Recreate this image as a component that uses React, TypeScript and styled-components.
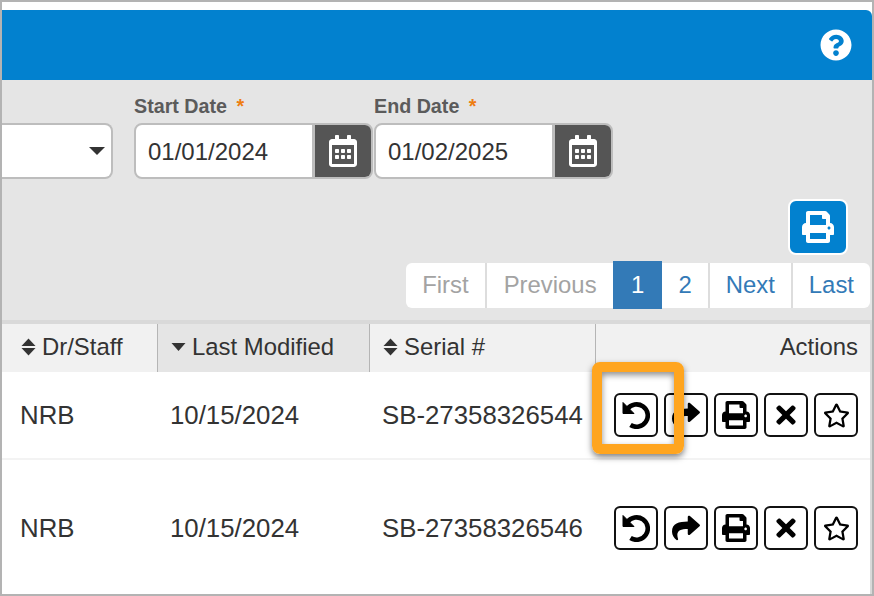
import styled, { createGlobalStyle } from 'styled-components';
import { FaPrint, FaQuestionCircle, FaRegCalendarAlt, FaRegStar, FaShare, FaTimes } from 'react-icons/fa';

const GlobalStyle = createGlobalStyle`
  html, body { margin: 0; padding: 0; background: #fff; }
  body { font-family: "Liberation Sans", Arial, sans-serif; color: #333; }
`;

const rows = [
  { staff: 'NRB', modified: '10/15/2024', serial: 'SB-27358326544', tall: false },
  { staff: 'NRB', modified: '10/15/2024', serial: 'SB-27358326546', tall: true },
];

export default function App() {
  return (
    <>
      <GlobalStyle />
      <Frame>
        <Banner>
          <HelpButton><FaQuestionCircle /></HelpButton>
        </Banner>
        <Filters>
          <SelectBox><SelectCaret /></SelectBox>
          <DateField label="Start Date" value="01/01/2024" />
          <DateField label="End Date" value="01/02/2025" />
        </Filters>
        <Tools>
          <PrintButton><FaPrint /></PrintButton>
          <Pager>
            <PageLink $muted>First</PageLink>
            <PageLink $muted>Previous</PageLink>
            <PageLink $active>1</PageLink>
            <PageLink $flush>2</PageLink>
            <PageLink>Next</PageLink>
            <PageLink>Last</PageLink>
          </Pager>
        </Tools>
        <Table>
          <HeadCell />
          <HeadCell><SortIcon />Dr/Staff</HeadCell>
          <HeadCell $sorted><SortIcon down />Last Modified</HeadCell>
          <HeadCell><SortIcon />Serial #</HeadCell>
          <ActionsHead>Actions</ActionsHead>
          {rows.map((row) => (
            <Row key={row.serial}>
              <Cell $tall={row.tall} />
              <Cell $tall={row.tall}>{row.staff}</Cell>
              <Cell $tall={row.tall}>{row.modified}</Cell>
              <Cell $tall={row.tall}>{row.serial}</Cell>
              <ActionCell $tall={row.tall}>
                <ActionButton><UndoIcon /></ActionButton>
                <ActionButton><FaShare /></ActionButton>
                <ActionButton><FaPrint /></ActionButton>
                <ActionButton><FaTimes /></ActionButton>
                <ActionButton $small><FaRegStar /></ActionButton>
              </ActionCell>
            </Row>
          ))}
        </Table>
        <Highlight />
      </Frame>
    </>
  );
}

function DateField({ label, value }: { label: string; value: string }) {
  return (
    <Field>
      <FieldLabel>{label} <Required>*</Required></FieldLabel>
      <DateGroup>
        <DateValue>{value}</DateValue>
        <CalendarButton><FaRegCalendarAlt /></CalendarButton>
      </DateGroup>
    </Field>
  );
}

function SortIcon({ down }: { down?: boolean }) {
  return (
    <svg width="15" height="18" viewBox="0 0 15 18" fill="currentColor">
      {down ? (
        <path d="M0.5 5 L14.5 5 L7.5 13 Z" />
      ) : (
        <>
          <path d="M7.5 0.5 L14.5 8 L0.5 8 Z" />
          <path d="M0.5 10 L14.5 10 L7.5 17.5 Z" />
        </>
      )}
    </svg>
  );
}

function UndoIcon() {
  return (
    <svg width="28" height="28" viewBox="0 0 28 28" fill="none">
      <path d="M1 1.5 L1 12.5 L12 12.5 Z" fill="#000" stroke="#000" strokeWidth="1" strokeLinejoin="round" />
      <path d="M5.5 8 A11.2 11.2 0 1 1 8.5 24" stroke="#000" strokeWidth="4.6" />
    </svg>
  );
}

const Frame = styled.div`
  position: relative;
  box-sizing: border-box;
  width: 874px;
  height: 596px;
  padding-top: 8px;
  border: 2px solid #b3b3b3;
  overflow: hidden;
  background: #fff;
`;

const Banner = styled.div`
  display: flex;
  align-items: center;
  justify-content: flex-end;
  height: 70px;
  padding-right: 20px;
  box-sizing: border-box;
  border-top-right-radius: 6px;
  background: #0281cf;
`;

const HelpButton = styled.div`
  display: flex;
  color: #fff;
  font-size: 32px;
`;

const Filters = styled.div`
  display: flex;
  align-items: flex-end;
  height: 110px;
  padding-bottom: 11px;
  box-sizing: border-box;
  background: #e5e5e5;
`;

const SelectBox = styled.div`
  display: flex;
  align-items: center;
  justify-content: flex-end;
  box-sizing: border-box;
  width: 111px;
  height: 56px;
  margin-right: 21px;
  padding-right: 6px;
  border: 2px solid #bdbdbd;
  border-left: 0;
  border-radius: 0 8px 8px 0;
  background: #fff;
`;

const SelectCaret = styled.span`
  width: 0;
  height: 0;
  border-left: 8px solid transparent;
  border-right: 8px solid transparent;
  border-top: 8px solid #333;
`;

const Field = styled.div`
  display: flex;
  flex-direction: column;
  margin-right: 1px;
`;

const FieldLabel = styled.div`
  height: 28px;
  color: #5b5b5b;
  font-size: 19.7px;
  font-weight: 700;
`;

const Required = styled.span`
  margin-left: 4px;
  color: #ee7d11;
`;

const DateGroup = styled.div`
  display: flex;
  box-sizing: border-box;
  width: 239px;
  height: 56px;
  border: 2px solid #bdbdbd;
  border-radius: 8px;
  background: #fff;
  overflow: hidden;
`;

const DateValue = styled.div`
  flex: 1;
  padding-left: 12px;
  border-right: 3px solid #bdbdbd;
  font-size: 24px;
  line-height: 54px;
  color: #333;
`;

const CalendarButton = styled.div`
  display: flex;
  align-items: center;
  justify-content: center;
  width: 56px;
  background: #555;
  color: #fff;
  font-size: 32px;
`;

const Tools = styled.div`
  display: flex;
  flex-direction: column;
  align-items: flex-end;
  height: 130px;
  padding-right: 2px;
  box-sizing: border-box;
  background: #e5e5e5;
`;

const PrintButton = styled.div`
  display: flex;
  align-items: center;
  justify-content: center;
  box-sizing: border-box;
  width: 60px;
  height: 56px;
  margin: 9px 22px 0 0;
  border: 2px solid #fff;
  border-radius: 8px;
  background: #0281cf;
  color: #fff;
  font-size: 32px;
`;

const Pager = styled.div`
  display: flex;
  align-items: center;
  margin-top: 6px;
  height: 48px;
`;

const PageLink = styled.div<{ $muted?: boolean; $active?: boolean; $flush?: boolean }>`
  display: flex;
  align-items: center;
  box-sizing: border-box;
  height: ${(p) => (p.$active ? '48px' : '45px')};
  padding: 0 ${(p) => (p.$active ? '18px' : p.$muted ? '16.5px' : '16px')};
  border-left: ${(p) => (p.$active || p.$flush ? '0' : '2px solid #ddd')};
  background: ${(p) => (p.$active ? '#337ab7' : '#fff')};
  color: ${(p) => (p.$active ? '#fff' : p.$muted ? '#a3a3a3' : '#337ab7')};
  font-size: 23.9px;
  &:first-child { border-left: 0; border-radius: 6px 0 0 6px; }
  &:last-child { border-radius: 0 6px 6px 0; }
`;

const Table = styled.div`
  display: grid;
  grid-template-columns: 6px 150px 212px 226px 274px;
  border-top: 4px solid #d9d9d9;
  border-right: 2px solid #d9d9d9;
  background: #fff;
`;

const HeadCell = styled.div<{ $sorted?: boolean }>`
  display: flex;
  align-items: center;
  gap: 6px;
  box-sizing: border-box;
  height: 48px;
  padding: 0 0 2px 13px;
  border-right: 1px solid #b5b5b5;
  background: ${(p) => (p.$sorted ? '#e5e5e5' : '#f1f1f1')};
  color: #333;
  font-size: 23.9px;
`;

const ActionsHead = styled(HeadCell)`
  justify-content: flex-end;
  padding-right: 12px;
  border-right: 0;
`;

const Row = styled.div`
  display: contents;
`;

const Cell = styled.div<{ $tall?: boolean }>`
  display: flex;
  align-items: center;
  box-sizing: border-box;
  height: ${(p) => (p.$tall ? '136px' : '88px')};
  padding-left: 12px;
  border-bottom: ${(p) => (p.$tall ? '0' : '2px solid #f3f3f3')};
  color: #333;
  font-size: 25.8px;
`;

const ActionCell = styled(Cell)`
  gap: 6px;
  padding-left: 18px;
`;

const ActionButton = styled.div<{ $small?: boolean }>`
  display: flex;
  align-items: center;
  justify-content: center;
  box-sizing: border-box;
  width: 44px;
  height: 44px;
  border: 2px solid #111;
  border-radius: 6px;
  background: #fff;
  color: #000;
  font-size: ${(p) => (p.$small ? '27px' : '28px')};
`;

const Highlight = styled.div`
  position: absolute;
  left: 590px;
  top: 360px;
  box-sizing: border-box;
  width: 92px;
  height: 92px;
  border: 10px solid #ffa51f;
  border-radius: 8px;
  box-shadow: 0 3px 6px rgba(0, 0, 0, 0.5), inset 0 3px 6px rgba(0, 0, 0, 0.45);
`;
